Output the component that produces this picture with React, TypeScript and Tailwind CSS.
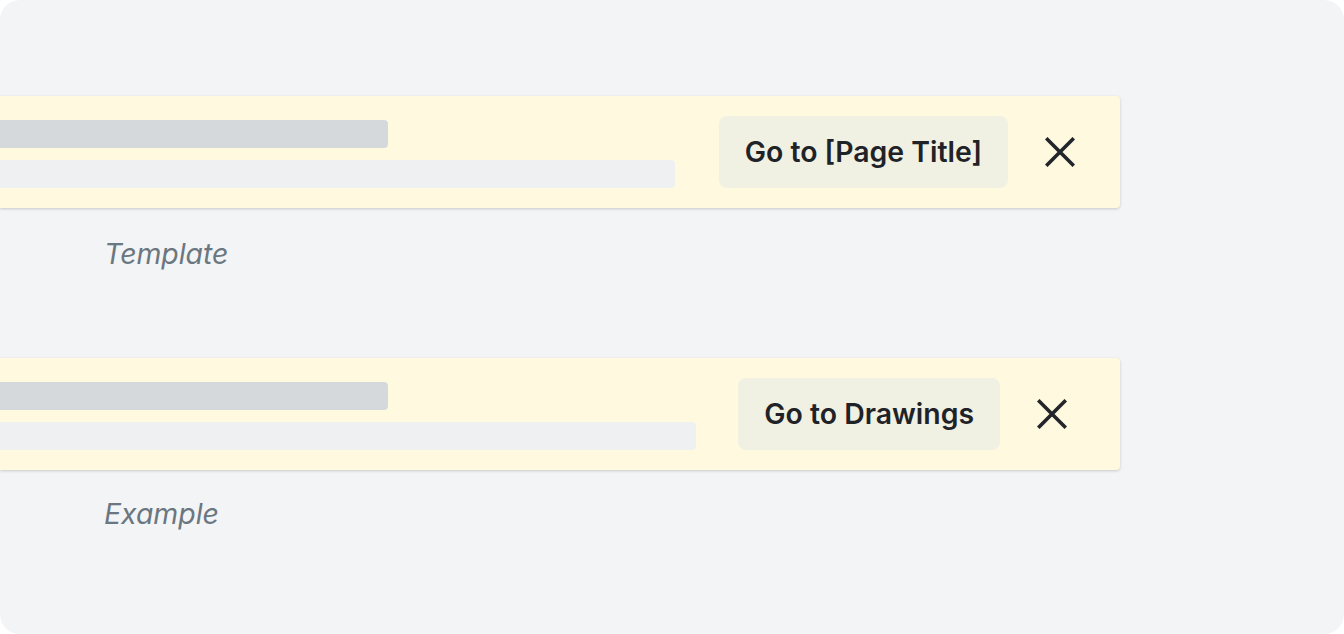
import React from "react";

function CloseIcon() {
  return (
    <svg width="30" height="30" viewBox="0 0 30 30" fill="none">
      <path d="M2.5 2.5L27.5 27.5M27.5 2.5L2.5 27.5" stroke="#22262a" strokeWidth="3.6" strokeLinecap="square" />
    </svg>
  );
}

function Banner({ label, gapClass, prClass }: { label: string; gapClass: string; prClass: string }) {
  return (
    <div className={`flex w-[1120px] items-end bg-[#fff9e0] py-5 rounded-r-[4px] shadow-[0_1px_3px_rgba(0,0,0,0.18)] ${prClass}`}>
      <div className={`flex flex-1 flex-col gap-3 ${gapClass}`}>
        <div className="h-7 w-[388px] rounded-r-[4px] bg-[#d6d9dc]" />
        <div className="h-7 w-full rounded-r-[4px] bg-[#eef0f2]" />
      </div>
      <button className="h-[72px] rounded-[8px] bg-[#f0f0e3] px-[26px] text-[28.4px] font-semibold text-[#1f2328]">
        {label}
      </button>
      <div className="ml-6 flex h-14 w-14 items-center justify-center self-center">
        <CloseIcon />
      </div>
    </div>
  );
}

export default function App() {
  return (
    <div className="h-[634px] w-[1344px] bg-white" style={{ fontFamily: "Inter, 'Noto Sans', sans-serif" }}>
      <div className="flex h-full w-full flex-col rounded-[20px] bg-[#f3f4f6] pt-24">
        <Banner label="Go to [Page Title]" gapClass="mr-11" prClass="pr-8" />
        <div className="pl-[104px] pt-[30px] text-[28.4px] italic leading-8 text-[#6b7780]">Template</div>
        <div className="mt-[88px]">
          <Banner label="Go to Drawings" gapClass="mr-[42px]" prClass="pr-10" />
        </div>
        <div className="pl-[104px] pt-[28px] text-[28.4px] italic leading-8 text-[#6b7780]">Example</div>
      </div>
    </div>
  );
}
